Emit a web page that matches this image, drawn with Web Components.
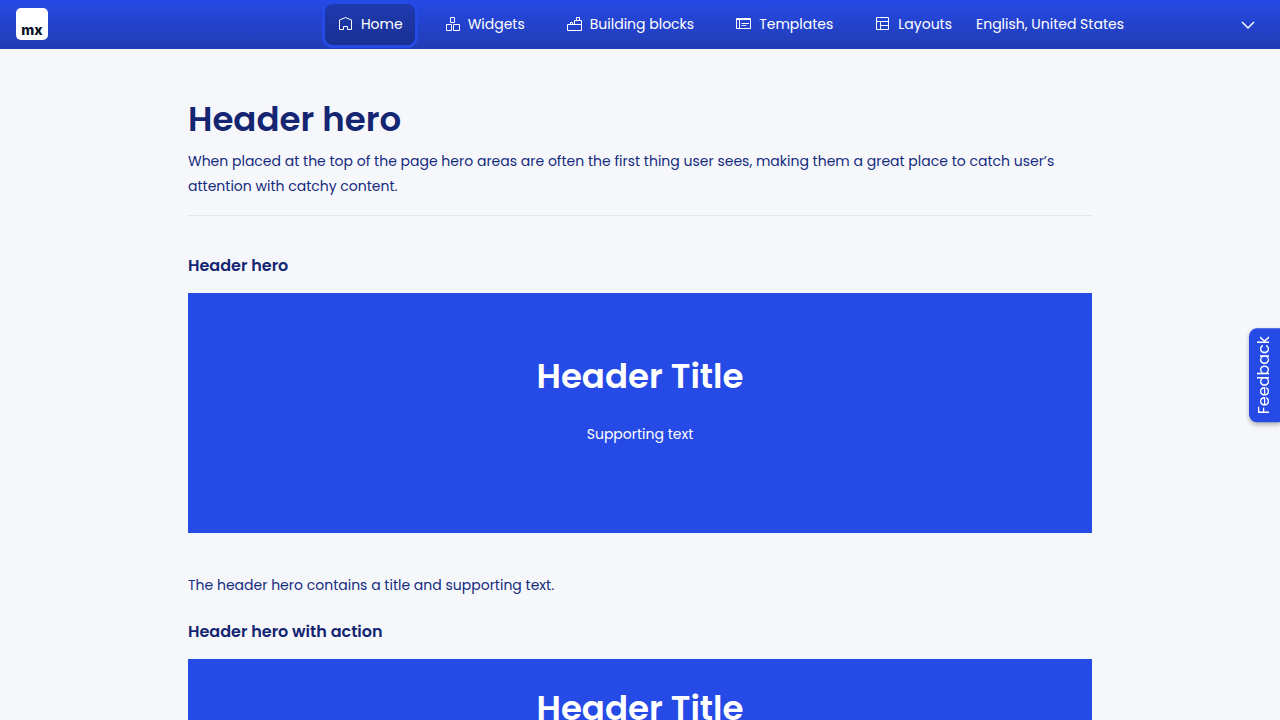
<!DOCTYPE html>
<html lang="en">
<head>
<meta charset="utf-8">
<meta name="viewport" content="width=device-width, initial-scale=1">
<title>Header hero</title>
<style>
  html { background: #f6f7fb; }
  body {
    margin: 0;
    font: 14px/25px Poppins, Inter, sans-serif;
    color: #142b7e;
    --brand: #264ae5;
    --heading: #142572;
  }
</style>
</head>
<body>
<app-topbar>
  <nav-item icon="home" active>Home</nav-item>
  <nav-item icon="widgets">Widgets</nav-item>
  <nav-item icon="blocks">Building blocks</nav-item>
  <nav-item icon="templates">Templates</nav-item>
  <nav-item icon="layouts">Layouts</nav-item>
  <language-picker slot="end"></language-picker>
</app-topbar>
<page-content>
  <page-intro>
    <span slot="title">Header hero</span>
    When placed at the top of the page hero areas are often the first thing user sees, making them a great place to catch user’s attention with catchy content.
  </page-intro>
  <demo-section>
    <span slot="title">Header hero</span>
    <header-hero><span slot="title">Header Title</span>Supporting text</header-hero>
    <span slot="note">The header hero contains a title and supporting text.</span>
  </demo-section>
  <demo-section>
    <span slot="title">Header hero with action</span>
    <header-hero compact><span slot="title">Header Title</span>Supporting text</header-hero>
  </demo-section>
</page-content>
<feedback-tab>Feedback</feedback-tab>

<script>
const define = (name, html, setup) => {
  const template = document.createElement('template');
  template.innerHTML = html;
  customElements.define(name, class extends HTMLElement {
    constructor() {
      super();
      this.attachShadow({ mode: 'open' }).append(template.content.cloneNode(true));
    }
    connectedCallback() { if (setup) setup(this, this.shadowRoot); }
  });
};

const icons = {
  home: '<path d="M2.5 12.5V3L8.5 .5l6 2.500V12.5H10.500V9.500H6.500V12.5Z"/>',
  widgets: '<path d="M6.500 .500h4v5h-4zM2.500 7.500h5v6h-5zM9.500 7.500h6v6h-6z"/>',
  blocks: '<path d="M1.500 7.500h7v-4h7v10h-14zM8.500 7.500h7M4.500 7.500v-2h2v2M10.500 3.500v-3h3v3"/>',
  templates: '<path d="M1.500 1.500h14v10h-14zM1.500 2.500h14M4.500 2.500v9M6.500 6.500h7.500"/><path d="M6.500 8.500h5" opacity=".8"/>',
  layouts: '<path d="M2.500 .500h12v12h-12zM2.500 4.500h12M6.500 4.500v8M6.500 8.500h8"/>'
};

define('app-topbar', `
  <style>
    :host { display: block; color: #fff; background: linear-gradient(#264ae5, #213cb4); }
    header { display: flex; align-items: flex-start; padding: 4px 16px; min-height: 41px; }
    .logo {
      display: flex; align-items: flex-end; justify-content: center;
      width: 32px; height: 32px; border-radius: 5px; box-sizing: border-box; margin: 4px 0;
      background: #fff; color: #0a1325; text-decoration: none;
      font: 800 14px/20px Inter, sans-serif;
    }
    nav { display: flex; gap: 17px; margin-left: auto; }
  </style>
  <header>
    <a class="logo" href="#" aria-label="mx home">mx</a>
    <nav aria-label="Main"><slot></slot></nav>
    <slot name="end"></slot>
  </header>`);

define('nav-item', `
  <style>
    :host { display: block; }
    a {
      display: flex; align-items: center; gap: 8px; padding: 8px 12px;
      color: inherit; text-decoration: none; border-radius: 8px;
    }
    :host([active]) a {
      background: linear-gradient(#1e3ab0, #1a3094);
      box-shadow: 0 0 0 3px var(--brand);
    }
    svg { width: 16px; height: 15px; fill: none; stroke: currentColor; flex: none; }
  </style>
  <a href="#"><svg viewBox="0 0 16 15" aria-hidden="true"></svg><span><slot></slot></span></a>`,
  (host, root) => {
    root.querySelector('svg').innerHTML = icons[host.getAttribute('icon')];
    if (host.hasAttribute('active')) root.querySelector('a').setAttribute('aria-current', 'page');
  });

define('language-picker', `
  <style>
    :host { display: grid; align-items: center; width: 300px; }
    select, svg { grid-area: 1 / 1; }
    select {
      appearance: none; width: 100%; height: 40px; padding: 0 32px 0 12px; border: 0;
      background: transparent; color: inherit; font: inherit;
    }
    option { color: #142b7e; }
    svg { justify-self: end; width: 16px; height: 16px; margin-right: 8px;
      fill: none; stroke: currentColor; stroke-width: 1.5; pointer-events: none; }
  </style>
  <select aria-label="Language"><option>English, United States</option></select>
  <svg viewBox="0 0 16 16" aria-hidden="true"><path d="M2 6l6 6 6-6"/></svg>`);

define('page-content', `
  <style>
    :host { display: block; }
    main { max-width: 904px; margin: 0 auto; padding: 48px 16px; }
  </style>
  <main><slot></slot></main>`);

define('page-intro', `
  <style>
    :host { display: block; border-bottom: 1px solid #e4e7ee; padding-bottom: 16px; margin-bottom: 36px; }
    h1 { margin: 0 0 8px; font-size: 34px; line-height: 44px; font-weight: 600; color: var(--heading); }
    p { margin: 0; }
  </style>
  <h1><slot name="title"></slot></h1>
  <p><slot></slot></p>`);

define('demo-section', `
  <style>
    :host { display: block; }
    h2 { margin: 0 0 13px; font-size: 16px; line-height: 28px; font-weight: 600; color: var(--heading); }
    p { margin: 40px 0 20px; }
  </style>
  <h2><slot name="title"></slot></h2>
  <slot></slot>
  <p><slot name="note"></slot></p>`);

define('header-hero', `
  <style>
    :host {
      display: flex; flex-direction: column; align-items: center; justify-content: center; gap: 24px;
      min-height: 240px; padding: 24px; box-sizing: border-box;
      background: var(--brand); color: #fff; text-align: center;
    }
    h3 { margin: 0; font-size: 34px; line-height: 44px; font-weight: 600; }
    p { margin: 0 0 26px; }
    button { display: none; margin: 26px 0 0; padding: 8px 16px; border: 1px solid #fff; border-radius: 4px;
      background: #fff; color: var(--brand); font: inherit; }
    :host([compact]) button { display: block; }
    :host([compact]) p { margin: 0; }
  </style>
  <h3><slot name="title"></slot></h3>
  <p><slot></slot></p>
  <button type="button">Action</button>`);

define('feedback-tab', `
  <style>
    :host { position: fixed; right: 0; top: 328px; }
    button {
      display: block; writing-mode: vertical-rl; rotate: 180deg;
      margin: 0; padding: 8px 0 8px 2px; border: 0; border-radius: 0 8px 8px 0;
      background: var(--brand); color: #fff; font: inherit; font-size: 16px; line-height: 29px;
      box-shadow: 0 -2px 4px #0004;
    }
  </style>
  <button type="button"><slot></slot></button>`);
</script>
</body>
</html>
